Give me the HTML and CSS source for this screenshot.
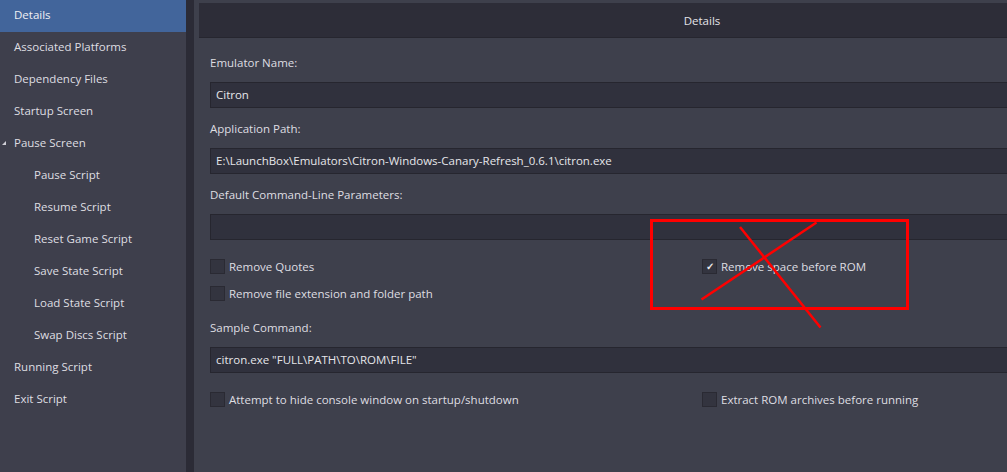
FILE: index.html
```html
<!DOCTYPE html>
<html lang="en">
<head>
    <meta charset="UTF-8">
    <title>Edit Emulator</title>
    <link rel="stylesheet" href="styles.css">
</head>
<body>
    <div class="app">
        <nav class="sidebar">
            <div class="nav-item active">Details</div>
            <div class="nav-item">Associated Platforms</div>
            <div class="nav-item">Dependency Files</div>
            <div class="nav-item">Startup Screen</div>
            <div class="nav-item expanded">Pause Screen</div>
            <div class="nav-item sub">Pause Script</div>
            <div class="nav-item sub">Resume Script</div>
            <div class="nav-item sub">Reset Game Script</div>
            <div class="nav-item sub">Save State Script</div>
            <div class="nav-item sub">Load State Script</div>
            <div class="nav-item sub">Swap Discs Script</div>
            <div class="nav-item">Running Script</div>
            <div class="nav-item">Exit Script</div>
        </nav>
        <div class="splitter"></div>
        <main class="main">
            <div class="header">Details</div>
            <div class="form">
                <div class="label">Emulator Name:</div>
                <div class="input">Citron</div>

                <div class="label">Application Path:</div>
                <div class="input">E:\LaunchBox\Emulators\Citron-Windows-Canary-Refresh_0.6.1\citron.exe</div>

                <div class="label">Default Command-Line Parameters:</div>
                <div class="input"></div>

                <div class="checks first">
                    <label class="check"><span class="box"></span>Remove Quotes</label>
                    <label class="check"><span class="box checked">&#10003;</span>Remove space before ROM</label>
                    <label class="check"><span class="box"></span>Remove file extension and folder path</label>
                </div>

                <div class="label">Sample Command:</div>
                <div class="input">citron.exe "FULL\PATH\TO\ROM\FILE"</div>

                <div class="checks last">
                    <label class="check"><span class="box"></span>Attempt to hide console window on startup/shutdown</label>
                    <label class="check"><span class="box"></span>Extract ROM archives before running</label>
                </div>
            </div>

            <!-- red markup drawn over the screenshot -->
            <svg class="markup" width="813" height="472" viewBox="194 0 813 472">
                <rect x="651.5" y="220.5" width="256" height="88" fill="none" stroke="#ff0000" stroke-width="3"/>
                <line x1="740" y1="227" x2="820.5" y2="327.5" stroke="#ff0000" stroke-width="2.5"/>
                <line x1="816.5" y1="222.5" x2="701.5" y2="299.5" stroke="#ff0000" stroke-width="2.5"/>
            </svg>
        </main>
    </div>
</body>
</html>
```

FILE: styles.css
```css
html, body {
    margin: 0;
    height: 100%;
    overflow: hidden;
}
body {
    font-family: "Open Sans", "Noto Sans", sans-serif;
    font-size: 11.5px;
    color: #dedee2;
    background-color: #3e3f4c;
}
.app {
    display: flex;
    height: 472px;
    width: 1007px;
}

/* left navigation */
.sidebar {
    width: 186px;
    flex: none;
    background-color: #3e3f4c;
}
.nav-item {
    position: relative;
    height: 32px;
    line-height: 30px;
    padding-left: 14px;
    white-space: nowrap;
}
.nav-item.sub {
    padding-left: 34px;
}
.nav-item.active {
    background-color: #42659b;
    color: #f0f0f4;
}
.nav-item.expanded::before {
    content: "";
    position: absolute;
    left: 2px;
    top: 13px;
    border-left: 4px solid transparent;
    border-bottom: 4px solid #cfcfd6;
}

.splitter {
    width: 8px;
    flex: none;
    background-color: #2b2b36;
}

/* main panel */
.main {
    position: relative;
    flex: 1;
    overflow: hidden;
    padding: 3px 0 0 5px;
    background-color: #3e404c;
}
.header {
    width: 1006px;
    height: 35px;
    line-height: 35px;
    text-align: center;
    background-color: #2d2d38;
    color: #e4e4e8;
    box-shadow: inset 0 -1px 0 #26262f;
}
.form {
    width: 984px;
    padding: 15px 0 0 11px;
    display: flex;
    flex-direction: column;
}
.label {
    height: 20px;
    line-height: 20px;
    margin: 11px 0 9px;
}
.form > .label:first-child {
    margin-top: 0;
}
.input {
    height: 24px;
    line-height: 24px;
    padding: 0 5px;
    background-color: #30313d;
    border: 1px solid #26262f;
    white-space: nowrap;
    color: #e6e6ea;
}

.checks {
    display: grid;
    grid-template-columns: 492px 492px;
    row-gap: 7px;
}
.checks.first {
    margin: 16px 0 4px;
}
.checks.last {
    margin-top: 16px;
}
.check {
    display: flex;
    align-items: center;
    height: 20px;
    gap: 4px;
    white-space: nowrap;
}
.box {
    width: 13px;
    height: 13px;
    background-color: #33343f;
    border: 1px solid #2a2a33;
    font-size: 10px;
    font-weight: bold;
    line-height: 13px;
    text-align: center;
    color: #e8e8ec;
}

.markup {
    position: absolute;
    left: 0;
    top: 0;
    pointer-events: none;
}
```
